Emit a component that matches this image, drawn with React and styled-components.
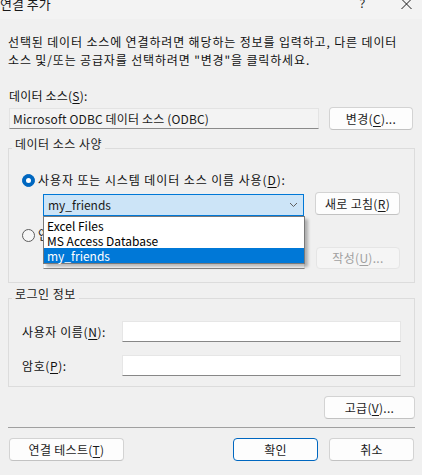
import React from 'react';
import styled, { createGlobalStyle } from 'styled-components';

const GlobalStyle = createGlobalStyle`
  html, body {
    margin: 0;
    padding: 0;
    background: #f0f0f0;
  }
  body {
    font-family: "Noto Sans CJK KR", "Noto Sans", sans-serif;
    font-size: 12px;
    color: #111;
  }
`;

const Window = styled.div`
  width: 422px;
  height: 475px;
  overflow: hidden;
  display: flex;
  flex-direction: column;
  background: #f0f0f0;
`;

const TitleBar = styled.div`
  height: 19px;
  flex-shrink: 0;
  display: flex;
  align-items: flex-start;
  background: #f3f3f3;
  overflow: hidden;
`;

const Title = styled.div`
  margin-top: -4px;
  line-height: 16px;
  font-size: 13px;
  color: #1a1a1a;
`;

const TitleButtons = styled.div`
  margin-left: auto;
  display: flex;
  align-items: flex-start;
  gap: 36px;
  padding-right: 10px;
`;

const Help = styled.span`
  margin-top: -4px;
  line-height: 16px;
  font-size: 12px;
  font-family: "Noto Sans", sans-serif;
  color: #1a1a1a;
`;

const Content = styled.div`
  padding: 0 7px 0 8px;
  display: flex;
  flex-direction: column;
`;

const Intro = styled.p`
  margin: 14px 0 0;
  line-height: 18px;
  letter-spacing: 0.85px;
  white-space: nowrap;
`;

const FieldLabel = styled.div`
  margin-top: ${p => p.$mt || 0}px;
  line-height: 18px;
  padding-left: 1px;
  letter-spacing: 0.2px;
`;

const Key = styled.u`
  text-underline-offset: 2px;
`;

const Row = styled.div`
  display: flex;
  align-items: ${p => p.$align || 'center'};
  margin-top: ${p => p.$mt || 0}px;
  padding: 0 ${p => p.$px || 0}px;
  justify-content: ${p => p.$justify || 'flex-start'};
`;

const ReadOnlyBox = styled.div`
  box-sizing: border-box;
  width: 310px;
  height: 21px;
  margin-top: 1px;
  padding-left: 3px;
  line-height: 19px;
  background: #f3f3f3;
  border: 1px solid #e3e3e3;
  border-bottom-color: #8a8a8a;
  color: #1a1a1a;
  letter-spacing: 0.15px;
`;

const Button = styled.button`
  box-sizing: border-box;
  width: ${p => p.$w || 85}px;
  height: ${p => p.$h || 23}px;
  margin-left: ${p => p.$ml || 0}px;
  padding: 0;
  font-family: inherit;
  font-size: 12px;
  line-height: 1;
  letter-spacing: 0.3px;
  color: #1b1b1b;
  background: #fdfdfd;
  border: 1px solid ${p => (p.$primary ? '#0067c0' : '#d3d3d3')};
  border-bottom-color: ${p => (p.$primary ? '#0067c0' : '#c2c2c2')};
  border-radius: 4px;
  flex-shrink: 0;

  &:disabled {
    color: #a0a0a0;
    background: #f5f5f5;
    border-color: #e5e5e5;
  }
`;

const Group = styled.fieldset`
  margin: ${p => p.$mt || 0}px 0 0;
  padding: 0;
  border: 1px solid #dcdcdc;
  min-width: 0;
`;

const Legend = styled.legend`
  margin-left: 3px;
  padding: 0 3px 8px;
  line-height: 16px;
  letter-spacing: 0.5px;
  color: #1a1a1a;
`;

const GroupBody = styled.div`
  padding: ${p => p.$pt}px 14px ${p => p.$pb}px 13px;
  display: flex;
  flex-direction: column;
`;

const RadioRow = styled.label`
  display: flex;
  align-items: center;
  gap: 3px;
  line-height: 18px;
  margin-top: ${p => p.$mt || 0}px;
  white-space: nowrap;
  letter-spacing: 0.9px;
`;

const RadioDot = styled.span`
  box-sizing: border-box;
  width: 13px;
  height: 13px;
  border-radius: 50%;
  flex-shrink: 0;
  display: flex;
  align-items: center;
  justify-content: center;
  background: ${p => (p.$on ? '#0067c0' : '#f6f6f6')};
  border: 1px solid ${p => (p.$on ? '#0067c0' : '#5d5d5d')};

  &::after {
    content: '';
    display: ${p => (p.$on ? 'block' : 'none')};
    width: 5px;
    height: 5px;
    border-radius: 50%;
    background: #fff;
  }
`;

const ComboWrap = styled.div`
  position: relative;
  margin-left: 21px;
  margin-top: 2px;
  width: 261px;
  height: 22px;
  z-index: 2;
`;

const Combo = styled.div`
  box-sizing: border-box;
  height: 22px;
  display: flex;
  align-items: center;
  padding: 0 5px 0 4px;
  background: #cce4f7;
  border: 1px solid #0078d7;
  color: #1a1a1a;
`;

const ComboText = styled.span`
  flex: 1;
  line-height: 18px;
`;

const DropList = styled.ul`
  position: absolute;
  top: 22px;
  left: 0;
  box-sizing: border-box;
  width: 262px;
  margin: 0;
  padding: 1px 0 0;
  list-style: none;
  background: #fff;
  border: 1px solid #7a7a7a;
  box-shadow: 3px 3px 3px rgba(0, 0, 0, 0.28);
`;

const DropItem = styled.li`
  height: 15px;
  line-height: 15px;
  padding-left: 3px;
  background: ${p => (p.$active ? '#0078d7' : 'transparent')};
  color: ${p => (p.$active ? '#fff' : '#000')};
`;

const TextInput = styled.div`
  box-sizing: border-box;
  width: ${p => p.$w}px;
  height: ${p => p.$h || 21}px;
  margin-left: ${p => p.$ml || 0}px;
  background: #fff;
  border: 1px solid #e6e6e6;
  border-bottom-color: #878787;
  flex-shrink: 0;
`;

const LoginLabel = styled.span`
  width: 100px;
  line-height: 18px;
  flex-shrink: 0;
  letter-spacing: 0.6px;
`;

const Separator = styled.div`
  height: 1px;
  margin-top: 8px;
  background: #a0a0a0;
`;

function Chevron() {
  return (
    <svg width="9" height="6" viewBox="0 0 9 6">
      <path d="M1 1 L4.5 4.5 L8 1" fill="none" stroke="#5f5f5f" strokeWidth="1" />
    </svg>
  );
}

function CloseIcon() {
  return (
    <svg width="11" height="10" viewBox="0 0 11 10" style={{ marginTop: -1 }}>
      <path d="M0.5 0 L10.5 10 M10.5 0 L0.5 10" stroke="#1a1a1a" strokeWidth="1" />
    </svg>
  );
}

export default function App() {
  return (
    <Window>
      <GlobalStyle />
      <TitleBar>
        <Title>연결 추가</Title>
        <TitleButtons>
          <Help>?</Help>
          <CloseIcon />
        </TitleButtons>
      </TitleBar>

      <Content>
        <Intro>
          선택된 데이터 소스에 연결하려면 해당하는 정보를 입력하고, 다른 데이터
          <br />
          소스 및/또는 공급자를 선택하려면 "변경"을 클릭하세요.
        </Intro>

        <FieldLabel $mt={18}>
          데이터 소스(<Key>S</Key>):
        </FieldLabel>
        <Row $mt={2} $px={1} $align="flex-start">
          <ReadOnlyBox>Microsoft ODBC 데이터 소스 (ODBC)</ReadOnlyBox>
          <Button $ml={10} $w={84}>
            변경(<Key>C</Key>)...
          </Button>
        </Row>

        <Group $mt={6}>
          <Legend>데이터 소스 사양</Legend>
          <GroupBody $pt={11} $pb={13}>
            <RadioRow>
              <RadioDot $on />
              <span>
                사용자 또는 시스템 데이터 소스 이름 사용(<Key>D</Key>):
              </span>
            </RadioRow>
            <Row $mt={3} $align="flex-start">
              <ComboWrap>
                <Combo>
                  <ComboText>my_friends</ComboText>
                  <Chevron />
                </Combo>
                <DropList>
                  <DropItem>Excel Files</DropItem>
                  <DropItem>MS Access Database</DropItem>
                  <DropItem $active>my_friends</DropItem>
                </DropList>
              </ComboWrap>
              <Button $ml={11} $w={85}>
                새로 고침(<Key>R</Key>)
              </Button>
            </Row>
            <RadioRow $mt={10}>
              <RadioDot />
              <span>
                연결 문자열 사용(<Key>G</Key>):
              </span>
            </RadioRow>
            <Row $mt={3}>
              <TextInput $w={262} $h={22} $ml={21} />
              <Button $ml={11} $w={84} $h={22} disabled>
                작성(<Key>U</Key>)...
              </Button>
            </Row>
          </GroupBody>
        </Group>

        <Group $mt={3}>
          <Legend>로그인 정보</Legend>
          <GroupBody $pt={11} $pb={10}>
            <Row>
              <LoginLabel>
                사용자 이름(<Key>N</Key>):
              </LoginLabel>
              <TextInput $w={279} />
            </Row>
            <Row $mt={13}>
              <LoginLabel>
                암호(<Key>P</Key>):
              </LoginLabel>
              <TextInput $w={279} />
            </Row>
          </GroupBody>
        </Group>

        <Row $mt={9} $justify="flex-end">
          <Button $w={91}>
            고급(<Key>V</Key>)...
          </Button>
        </Row>

        <Separator />

        <Row $mt={10} $px={1}>
          <Button $w={115}>
            연결 테스트(<Key>T</Key>)
          </Button>
          <Button $primary $ml={109} $w={85}>
            확인
          </Button>
          <Button $ml={11} $w={85}>
            취소
          </Button>
        </Row>
      </Content>
    </Window>
  );
}
